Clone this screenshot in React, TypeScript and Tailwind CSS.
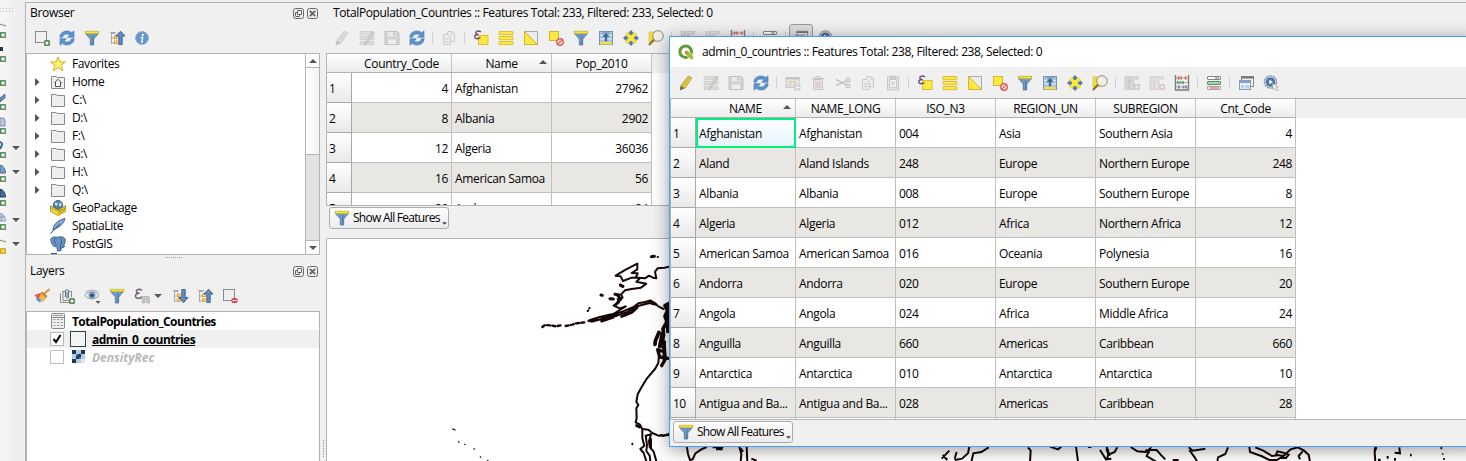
import React from "react";

type IconName = keyof typeof icons;

const Badge = () => (
  <g>
    <rect x="10" y="10" width="6" height="6" rx="1.5" fill="#5a8c5a" />
    <circle cx="13" cy="13" r="1.5" fill="#fff" />
  </g>
);

const Arrow = ({ down = false }: { down?: boolean }) => (
  <g>
    <path d="M2.5 2.5V14M2.5 3.5H6M2.5 8H5M2.5 13H5" stroke="#aaa" fill="none" />
    <path d="M1 2.5H7" stroke="#aaa" />
    <rect x="5.5" y="6" width="2.5" height="2.5" fill="#ffe0a0" stroke="#f09a2a" />
    <rect x="5.5" y="11" width="2.5" height="2.5" fill="#ffe0a0" stroke="#f09a2a" />
    <path
      d={down ? "M11.5 14.7L6.8 9.5H9.8V1.5H13.2V9.5H16Z" : "M11.5 1.2L6.8 6H9.8V14.5H13.2V6H16Z"}
      fill="#5f8fc0"
      stroke="#355a86"
      strokeWidth=".9"
    />
  </g>
);

const Lines = ({ a, b }: { a: string; b: string }) => (
  <g>
    {[1.5, 6.5, 11.5].map((y) => (
      <rect key={y} x="1" y={y} width="14" height="3.2" rx=".4" fill={a} stroke={b} strokeWidth=".8" />
    ))}
  </g>
);

const icons = {
  add: (
    <g>
      <rect x="1.5" y="1.5" width="11" height="11" fill="#f0f0f0" stroke="#8c8c8c" />
      <Badge />
    </g>
  ),
  refresh: (
    <g fill="#5b92cf" stroke="#3f74b0" strokeWidth=".6">
      <path d="M.8 7.2C1 3.2 4.3 1 8 1C10 1 11.7 1.7 12.8 2.8L15 .8V7.3H8.6L10.8 5C10 4.3 9.1 4 8 4C5.6 4 4 5 3.6 7.2Z" />
      <path d="M15.2 8.8C15 12.8 11.7 15 8 15C6 15 4.3 14.3 3.2 13.2L1 15.2V8.7H7.4L5.2 11C6 11.7 6.9 12 8 12C10.4 12 12 11 12.4 8.8Z" />
    </g>
  ),
  filter: (
    <g>
      <path d="M1.5 3.5L6.3 9V15H9.7V9L14.5 3.5Z" fill="#6f9bc9" stroke="#4a729c" strokeWidth=".8" />
      <rect x="1.2" y="1.2" width="13.6" height="2.6" fill="#f5e440" stroke="#b8a52c" strokeWidth=".6" />
      <path d="M8.8 5V14.5" stroke="#4a78aa" />
    </g>
  ),
  collapse: <Arrow />,
  expand: <Arrow down />,
  info: (
    <g>
      <circle cx="8" cy="8" r="6.4" fill="#6797c9" stroke="#8aaed4" />
      <circle cx="8.8" cy="4.9" r="1.1" fill="#fff" />
      <path d="M6.8 7.3H8.7L7.7 11.8H9.1" stroke="#fff" strokeWidth="1.3" fill="none" />
    </g>
  ),
  star: (
    <path
      d="M8 .8L10 6H15.4L11.2 9.2L12.8 15L8 11.6L3.2 15L4.8 9.2L.6 6H6Z"
      fill="#fdf070"
      stroke="#d3b02c"
    />
  ),
  folder: <path d="M1.5 2.500H6L7.500 3.500H14.500V14.500H1.500Z" fill="#eee" stroke="#888" />,
  home: (
    <g>
      <path d="M1.5 2.500H6L7.5 3.5H14.5V14.500H1.5Z" fill="#eee" stroke="#888" />
      <path d="M4.3 9L8 5.3L11.7 9M5.5 8.3V12.5H10.5V8.3" fill="#fff" stroke="#333" strokeWidth=".9" />
    </g>
  ),
  geopackage: (
    <g>
      <path d="M.5 6L8 9.5L15.5 6V11.5L8 15.5L.5 11.5Z" fill="#f4dc33" stroke="#a08a20" strokeWidth=".8" />
      <path d="M8 9.5V15.5L15.5 11.5V6Z" fill="#d8b91f" />
      <circle cx="8" cy="5" r="4.6" fill="#547ca5" stroke="#314f70" strokeWidth=".8" />
      <path d="M5 2.5L8 3L7 6L5 5ZM9.5 2L12 4.5L10 7L9 5Z" fill="#c8dcef" />
      <path d="M.5 6L8 9.7L15.5 6L15.5 8L8 11L.5 8Z" fill="#f7e24a" stroke="#796b25" strokeWidth=".6" />
    </g>
  ),
  feather: (
    <g>
      <path d="M15 .5C10 1.500 5.500 4.500 3.500 8.5L3 12L6 10.500C10.500 8.500 14 5 15 .5Z" fill="#87add4" stroke="#365a80" strokeWidth=".9" />
      <path d="M.5 15.500L10 5.500" stroke="#2e4b6b" />
    </g>
  ),
  elephant: (
    <g fill="#6594c2" stroke="#33567c" strokeWidth=".8">
      <path d="M.8 3C2 .8 5 .6 7 1.300C10 .3 14 .6 15.200 3C15.700 6 14.500 8.500 13 10H15L13.500 11.500H11.500C11.300 13 11.200 14 10.500 15H7.500C7 13.500 7.200 12 7 10.500L5 10.800C3 10.500 .5 6 .8 3Z" />
      <path d="M5 2.500C4 5 4.500 8 6.500 9M10.500 2.500C12.500 5 11.500 7 10.500 9V13" fill="none" />
    </g>
  ),
  brush: (
    <g>
      <path d="M15.500 1L10 6" stroke="#c99a4a" strokeWidth="2" />
      <path d="M6 5L8.500 3.500L13.500 8L12 10.500Z" fill="#c98f3a" />
      <path d="M.5 7L6 5L8.500 8L4 11.500Z" fill="#ea5a50" />
      <path d="M7 6L10 8.500L12 10.500L8 14.500L4.500 11Z" fill="#f2bb4c" />
      <path d="M1.500 11L4.500 9.500L7.500 12.500L5.500 14.500Z" fill="#5a93d8" />
    </g>
  ),
  addgroup: (
    <g fill="none" stroke="#868686">
      <path d="M1.500 5.500V14.500H10M3.500 3.500H4V12.500H10M3.500 3.500H6M10 3.500H12.500V9" />
      <path d="M6.500 9V2.500Q8 .5 9.500 2.500V10M8 4V11" stroke="#56718e" />
      <g stroke="none">
        <Badge />
      </g>
    </g>
  ),
  eye: (
    <g>
      <path d="M.8 7.500C4 2.500 11.500 2.500 15 7.500C11.500 12 4 12 .8 7.500Z" fill="#eee" stroke="#9a9a9a" />
      <circle cx="8" cy="7.300" r="3.400" fill="#6b97c4" />
      <circle cx="8" cy="7.300" r="1.600" fill="#254a72" />
      <path d="M1 4.500C5 1.500 11 1.500 15 4.500" fill="none" stroke="#aaa" />
      <path d="M11.500 13H16.500L14 15.800Z" fill="#555" />
    </g>
  ),
  epsilon: (
    <g>
      <path d="M8 2.500C5.500 .3 2 1.500 2.500 4C2.800 5.200 4 5.500 5.500 5.300C3 5.500 1 6.500 1.500 8.500C2 11 6 11 8 8.800" fill="none" stroke="#7a5a80" strokeWidth="1.500" />
      <path d="M8 15V9.500Q8 8.500 9 8.500H14Q15.500 8.500 15.500 10V15H12.800V11.500H11V15Z" fill="#c8c8c8" stroke="#999" strokeWidth=".5" />
    </g>
  ),
  remove: (
    <g>
      <rect x="1.500" y="1.500" width="11" height="11" fill="#eee" stroke="#8c8c8c" />
      <rect x="9.500" y="10" width="6" height="5" rx="1.500" fill="#e6474f" />
      <path d="M10.500 12.500H14.500" stroke="#fff" />
    </g>
  ),
  table: (
    <g>
      <rect x="1.500" y=".5" width="13" height="15" rx="1" fill="#eee" stroke="#888" />
      <path d="M2 4.500H14" stroke="#888" />
      <path d="M3 2.500H13M3.500 6.500H5.500M7 6.500H9M10.500 6.500H13M3.500 9.500H5.500M7 9.500H9M10.500 9.500H13M3.500 12.500H5.500M7 12.500H9M10.500 12.500H13" stroke="#999" />
    </g>
  ),
  raster: (
    <g>
      <rect x="1" y="1" width="13" height="13" fill="#b4cbe8" />
      <path d="M1 1H5V5H1ZM10 1H14V5H10ZM5 5H10V10H5ZM1 10H5V14H1Z" fill="#20365a" />
      <path d="M5 5H7V7H5ZM8 8H10V10H8Z" fill="#5678a6" />
      <path d="M10 10H14V14H10Z" fill="#dce8f5" />
    </g>
  ),
  pencil: (
    <g>
      <path d="M3 10.500L10.500 1L13.800 3L7 13L2.200 15Z" fill="#ecd63c" stroke="#9a8a3a" strokeWidth=".8" />
      <path d="M1.800 15.200L3 10.800L6.500 13Z" fill="#6a6658" />
      <path d="M5 11L11.800 2.200" stroke="#b29d24" />
    </g>
  ),
  pencilOff: (
    <g>
      <path d="M3 10.500L10.500 1L13.800 3L7 13L2.200 15Z" fill="#dbdad8" stroke="#c6c5c2" strokeWidth=".8" />
      <path d="M1.800 15.200L3 10.800L6.500 13Z" fill="#bdbdbd" />
    </g>
  ),
  multiOff: (
    <g>
      <Lines a="#dddcd7" b="#ceccc5" />
      <path d="M6 13L13 2L15 3.500L8 13L5.500 14.500Z" fill="#d2d2d0" stroke="#b7b7b7" strokeWidth=".7" />
    </g>
  ),
  saveOff: (
    <g>
      <path d="M1 1.500H13L15 3.500V14.500H1Z" fill="#d2d2d2" stroke="#c0c0c0" />
      <path d="M3.500 2H12V6.500H3.500Z" fill="#e8e8e8" />
      <path d="M4 9.500H12V14H4Z" fill="#eee" />
      <path d="M9.500 2.500H11V5.500H9.500Z" fill="#bbb" />
    </g>
  ),
  copyOff: (
    <g fill="#ececec" stroke="#cacaca">
      <path d="M6.500 1.500H11L13.500 4V11.500H6.500Z" />
      <path d="M2.500 4.500H7L9.500 7V14.500H2.500ZM4 9H8M4 11.500H8M11 1.500V4H13.500" />
    </g>
  ),
  pasteOff: (
    <g fill="#e2e2e2" stroke="#c8c8c8">
      <rect x="2.500" y="2" width="11" height="13" />
      <path d="M4.500 4.500H11.500V12.500H4.500Z" fill="#efefef" />
      <path d="M5.500 1H10.500V4H5.500Z" fill="#cecece" />
      <path d="M6 7.500H10M6 9.500H9" />
    </g>
  ),
  cutOff: (
    <g fill="none" stroke="#c5c5c5" strokeWidth="1.400">
      <path d="M1 4.500L11 9.500M1 10.500L11 6" />
      <circle cx="13" cy="5" r="1.800" />
      <circle cx="13" cy="11" r="1.800" />
    </g>
  ),
  trashOff: (
    <g fill="#e9e2e2" stroke="#cdc2c2">
      <path d="M3.500 4.500H12.500V14.500H3.500Z" />
      <path d="M2 3.500H14M6 3V1.500H10V3M6 6.500V13M8 6.500V13M10 6.500V13" fill="none" />
    </g>
  ),
  addrowOff: (
    <g>
      <rect x="1" y="2.500" width="13" height="10" fill="#e7e7e7" stroke="#c5c5c5" />
      <path d="M1 3.500H14" stroke="#c4c4c4" strokeWidth="2" />
      <path d="M3 7H12" stroke="#e4dcb0" strokeWidth="2" />
      <path d="M1 10H14M5.500 5V12M9.500 5V12" stroke="#cfcfcf" />
      <rect x="9.500" y="9.500" width="6" height="6" fill="#cfcfcb" />
      <path d="M12.500 10.500V14.500M10.500 12.500H14.500" stroke="#f4f4f4" />
    </g>
  ),
  selExpr: (
    <g>
      <rect x="5.500" y="5.500" width="9.500" height="9" fill="#fce83e" stroke="#d8bd30" />
      <path d="M8 2C5.500 .2 2.500 1.200 2.800 3.200C3 4.300 4.300 4.700 5.500 4.500C3.300 4.500 1.300 5.400 1.700 7.200C2.200 9.200 5.500 9.300 7.500 7.500" fill="none" stroke="#6a4670" strokeWidth="1.400" />
    </g>
  ),
  selAll: <Lines a="#fce83e" b="#d2b52c" />,
  invert: (
    <g>
      <path d="M1.500 1.500H14.500V14.500Z" fill="#ececec" stroke="#a8a8a8" />
      <path d="M1.500 1.500V14.500H14.500Z" fill="#fce83e" stroke="#d2b52c" />
    </g>
  ),
  deselect: (
    <g>
      <rect x="1.500" y="1.500" width="9" height="9" fill="#fce83e" stroke="#d2b52c" />
      <circle cx="12" cy="12" r="3.300" fill="#f6d0d0" stroke="#dc4a4e" strokeWidth="1.200" />
      <path d="M9.800 14.200L14.200 9.800" stroke="#dc4a4e" />
    </g>
  ),
  moveTop: (
    <g>
      <rect x="1.500" y="1.500" width="13" height="13" fill="#a9c4e2" stroke="#7394b8" />
      <rect x="2" y="12" width="12" height="2.500" fill="#f5e03e" />
      <path d="M2 5.500H14M2 9H14" stroke="#e3edf7" />
      <path d="M8 3.500L4.800 6.500H7.200V11H8.800V6.500H11.200ZM4.500 3H11.500" fill="#39638f" stroke="#39638f" strokeWidth=".6" />
    </g>
  ),
  pan: (
    <g>
      <rect x="3" y="3" width="10" height="10" fill="#fce83e" stroke="#e0cf55" strokeWidth=".7" />
      <path d="M8 0L11 3.200H9.300V5H6.700V3.200H5ZM8 16L11 12.800H9.300V11H6.700V12.800H5ZM0 8L3.200 5V6.700H5V9.300H3.200V11ZM16 8L12.800 5V6.700H11V9.300H12.800V11Z" fill="#527ba6" />
    </g>
  ),
  zoomSel: (
    <g>
      <path d="M1 2H7V12H1Z" fill="#f7de34" stroke="#d2b52c" strokeWidth=".6" />
      <path d="M6 9.500L1 15" stroke="#8b6d38" strokeWidth="2" />
      <circle cx="10" cy="6" r="5.300" fill="#f1efe0" stroke="#8d8d88" />
    </g>
  ),
  newColOff: (
    <g>
      <path d="M1 1.500H4.500V14.500H1ZM5.500 1.500H14.500V4H5.500ZM5.500 5.500H10V14.500H5.500Z" fill="#dcdcdc" stroke="#c6c6c6" strokeWidth=".8" />
      <path d="M1 5H10M1 8H10M1 11H10" stroke="#cacaca" />
      <rect x="10" y="9" width="6" height="6" rx="1" fill="#cacac6" />
      <path d="M13 10V14M11 12H15" stroke="#f4f4f4" />
    </g>
  ),
  delColOff: (
    <g>
      <path d="M1 1.500H4.500V14.500H1ZM5.500 1.500H14.500V4H5.500ZM5.500 5.500H10V14.500H5.500Z" fill="#e3e0e0" stroke="#cecccc" strokeWidth=".8" />
      <rect x="10" y="9" width="6" height="6" rx="1" fill="#dac6c8" />
      <path d="M11.500 10.500L14.500 13.500M14.500 10.500L11.500 13.500" stroke="#f8f4f4" />
    </g>
  ),
  abacus: (
    <g>
      <path d="M1.500 0V15.500M14.500 0V15.500M1 15H15" stroke="#7b7b7b" strokeWidth="1.400" />
      <path d="M2 3H14M2 7.500H14M2 12H14" stroke="#aaa" />
      <path d="M4.500 1.500V4.500M7 1.500V4.500M11.500 1.500V4.500" stroke="#e2595c" strokeWidth="1.700" />
      <path d="M4 6V9M6.500 6V9M9 6V9" stroke="#62a56c" strokeWidth="1.700" />
      <path d="M5 10.500V13.500M9.500 10.500V13.500M12 10.500V13.500" stroke="#6f87a4" strokeWidth="1.700" />
    </g>
  ),
  conditional: (
    <g>
      <rect x="1.500" y="1.500" width="13" height="3" rx=".5" fill="#fafafa" stroke="#858585" />
      <rect x="1.500" y="6.500" width="13" height="3" rx=".5" fill="#a5d6b0" stroke="#5d8f69" />
      <rect x="1.500" y="11.500" width="13" height="3" rx=".5" fill="#fafafa" stroke="#a5a5a5" />
      <path d="M9 3H13" stroke="#777" />
      <path d="M3.500 13H13" stroke="#d84848" />
    </g>
  ),
  dock: (
    <g>
      <rect x="3.500" y="1.500" width="12" height="10" fill="#eee" stroke="#8b8b8b" />
      <path d="M3 2.500H16" stroke="#777" strokeWidth="2" />
      <rect x="1.500" y="5.500" width="11" height="9" fill="#e9f0f8" stroke="#8b9bb0" />
      <path d="M2 7H12" stroke="#6c9bcb" strokeWidth="1.800" />
      <path d="M3 10H6V13.500H3ZM7.500 10H11.500V13.500H7.500Z" fill="#b9cee4" />
    </g>
  ),
  actions: (
    <g>
      <circle cx="7.500" cy="7" r="6.200" fill="#c3ccd6" stroke="#8b97a6" strokeWidth="1.200" strokeDasharray="2.600 .8" />
      <circle cx="7.500" cy="7" r="4" fill="#4d7eb5" stroke="#355f90" />
      <path d="M6.300 4.800L9.900 7L6.300 9.200Z" fill="#fff" />
      <path d="M9.500 8.500L15 12L13 12.500L15.500 15L14 16L12 13.500L10.500 15Z" fill="#fff" stroke="#999" strokeWidth=".7" />
    </g>
  ),
};

const Icon = ({ name, size = 16 }: { name: IconName; size?: number }) => (
  <svg width={size} height={size} viewBox="0 0 16 16" className="shrink-0 overflow-visible">
    {icons[name]}
  </svg>
);

const Toolbar = ({ items }: { items: (IconName | "|")[] }) => (
  <div className="flex h-[25px] shrink-0 items-center">
    {items.map((n, i) =>
      n === "|" ? (
        <div key={i} className="flex h-3 w-[7px] shrink-0 justify-center">
          <div className="w-px bg-[#d0d0d0]" />
        </div>
      ) : (
        <div key={i} className="flex w-[25px] shrink-0 justify-center">
          <Icon name={n} />
        </div>
      ),
    )}
  </div>
);

const DockTitle = ({ title }: { title: string }) => (
  <div className="flex h-[18px] shrink-0 items-center justify-between pr-0.5 pl-[4px]">
    <span className="tracking-[-0.3px]">{title}</span>
    <span className="flex gap-[3px]">
      <svg width="11" height="11" viewBox="0 0 11 11" fill="none" stroke="#666">
        <rect x=".5" y=".5" width="10" height="10" rx="2" />
        <path d="M4.500 2.500H8.500V6.500H4.500ZM4 4.500H2.500V8.500H6.500V7" />
      </svg>
      <svg width="11" height="11" viewBox="0 0 11 11" fill="none" stroke="#666">
        <rect x=".5" y=".5" width="10" height="10" rx="2" />
        <path d="M2.800 2.800L8.200 8.200M8.200 2.800L2.800 8.200" strokeWidth="1.900" />
      </svg>
    </span>
  </div>
);

const tree: [IconName, string, boolean][] = [
  ["star", "Favorites", false],
  ["home", "Home", true],
  ["folder", "C:\\", true],
  ["folder", "D:\\", true],
  ["folder", "F:\\", true],
  ["folder", "G:\\", true],
  ["folder", "H:\\", true],
  ["folder", "Q:\\", true],
  ["geopackage", "GeoPackage", false],
  ["feather", "SpatiaLite", false],
  ["elephant", "PostGIS", false],
];

const Tri = ({ up = false }: { up?: boolean }) => (
  <svg width="8" height="4" viewBox="0 0 8 4" className="shrink-0">
    <path d={up ? "M0 4H8L4 0Z" : "M0 0H8L4 4Z"} fill="#555" />
  </svg>
);

const ShowAll = () => (
  <div className="relative ml-[3px] flex h-[22px] w-[120px] shrink-0 items-center gap-[3px] rounded-[3px] border border-[#adadad] bg-linear-to-b from-[#fefefe] to-[#ececec] pl-[4px]">
    <Icon name="filter" />
    <span className="tracking-[-0.72px]">Show All Features</span>
    <svg width="5" height="3" viewBox="0 0 6 3" className="absolute right-px bottom-[3px]">
      <path d="M0 0H6L3 3Z" fill="#444" />
    </svg>
  </div>
);

const Grid = ({
  cols,
  rows,
  sorted,
  rightCols,
  selected = false,
}: {
  cols: string[];
  rows: string[][];
  sorted: number;
  rightCols: number[];
  selected?: boolean;
}) => (
  <div className="min-h-0 flex-1 overflow-hidden bg-white tracking-[-0.33px]">
    <div className="flex h-[19px] bg-[#f0f0f0]">
      <div className="flex border-b border-[#b0b0b0] bg-linear-to-b from-white to-[#ececec]">
        <div className="w-[25px]" />
        {cols.map((c, i) => (
          <div
            key={c}
            className="relative flex w-[100px] items-center justify-center border-r border-[#c4c4c4] pt-px"
          >
            {c}
            {i === sorted && (
              <span className="absolute top-[6px] right-1">
                <Tri up />
              </span>
            )}
          </div>
        ))}
      </div>
    </div>
    {rows.map((r, ri) => (
      <div key={ri} className="flex h-[30px]">
        <div className="flex w-[25px] items-center border-r border-b border-[#a8a8a8] bg-linear-to-b from-white to-[#e9e9e9] pt-[3px] pl-0.5 tracking-[-0.6px]">
          {ri + 1}
        </div>
        {r.map((v, ci) => (
          <div
            key={ci}
            className={`flex w-[100px] items-center border-r border-b border-[#c0c0c0] px-[3px] pt-0.5 whitespace-nowrap ${
              ri % 2 ? "bg-[#e8e7e3]" : "bg-white"
            } ${rightCols.includes(ci) ? "justify-end" : ""} ${
              selected && ri === 0 && ci === 0
                ? "bg-linear-to-b from-white to-[#e6f3fd] outline-2 -outline-offset-2 outline-[#00f080]"
                : ""
            }`}
          >
            {v}
          </div>
        ))}
      </div>
    ))}
  </div>
);

const population = [
  ["4", "Afghanistan", "27962"],
  ["8", "Albania", "2902"],
  ["12", "Algeria", "36036"],
  ["16", "American Samoa", "56"],
  ["20", "Andorra", "84"],
];

const countries = [
  ["Afghanistan", "Afghanistan", "004", "Asia", "Southern Asia", "4"],
  ["Aland", "Aland Islands", "248", "Europe", "Northern Europe", "248"],
  ["Albania", "Albania", "008", "Europe", "Southern Europe", "8"],
  ["Algeria", "Algeria", "012", "Africa", "Northern Africa", "12"],
  ["American Samoa", "American Samoa", "016", "Oceania", "Polynesia", "16"],
  ["Andorra", "Andorra", "020", "Europe", "Southern Europe", "20"],
  ["Angola", "Angola", "024", "Africa", "Middle Africa", "24"],
  ["Anguilla", "Anguilla", "660", "Americas", "Caribbean", "660"],
  ["Antarctica", "Antarctica", "010", "Antarctica", "Antarctica", "10"],
  ["Antigua and Ba...", "Antigua and Ba...", "028", "Americas", "Caribbean", "28"],
];

const sideIcons: { art: React.ReactNode; menu?: boolean; yellow?: boolean }[] = [
  { art: <path d="M0 4Q2 2 3 4T6 4" stroke="#777" fill="none" /> },
  { art: <path d="M0 2H3V6H0Z" fill="#20365a" /> },
  { art: null },
  { art: <path d="M0 5L5 1V5L0 9Z" fill="#6f93ba" stroke="#33567c" strokeWidth=".7" /> },
  { art: <path d="M0 1H3Q5 1 5 4V9H0Z" fill="#b8cade" stroke="#7c8ea5" /> },
  { art: <path d="M0 1Q3 2 1.500 5L0 8" stroke="#3d6796" strokeWidth="2" fill="none" />, menu: true },
  { art: <path d="M0 0Q5 1 5.500 8H0Z" fill="#7fa2c6" stroke="#42658c" />, menu: true },
  { art: <path d="M0 0Q5 1 5.500 8H0Z" fill="#466f9c" stroke="#1f3a5a" /> },
  { art: <path d="M0 0Q5 1 5.500 8H0ZM0 4H5M2 1V8" fill="#e2ebf5" stroke="#7c9abb" />, menu: true },
  { art: <path d="M0 4Q2 2 3 4T6 4" stroke="#777" fill="none" />, menu: true, yellow: true },
];

const MapOutlines = () => (
  <svg width="1139" height="222" viewBox="327 239 1139 222" className="block" fill="none" stroke="#150606">
    <g transform="translate(325 235) scale(.33333)" strokeWidth="6" strokeLinejoin="round" strokeLinecap="round">
      <path d="M1040 94L1018 98L998 100L990 110L994 130L984 128L972 122L960 130L940 128L920 128L894 138L887 124L872 122L902 104L937 86L937 103L920 114L938 115L933 126L943 132L934 140L964 146L948 158L920 162L900 166L888 178L893 188L878 192L882 202L866 212L884 220L902 214L886 224L870 234" />
      <path d="M878 182L888 192L880 200L870 212" strokeWidth="8" />
      <path d="M790 258L824 246L860 238L892 230L926 216L940 205L960 201L976 196L990 204L1000 214L1016 222M800 260L838 250L876 242L910 230L936 214L974 204L996 210" />
      <path d="M794 257L812 252M832 249L878 238M890 244L920 232L936 218M972 200L986 206M830 258L865 246" strokeWidth="9" />
      <path d="M652 276L660 270L676 271L692 274L708 271M722 273L742 269L754 265L780 262" strokeWidth="7" strokeDasharray="9 7" />
      <path d="M1034 204L1020 212L1028 226L1020 244L1026 260L1014 282L1016 300L1010 330L1018 342L1020 368M1034 232L1027 250L1031 280M1002 292L991 318L990 328M1012 296L1004 334" strokeWidth="11" />
      <path d="M1028 210V290M1018 320V376M1030 370L1004 366L998 344L1010 348M1010 392L1020 374" strokeWidth="10" />
      <path d="M1002 360L1000 384L990 402L966 430L950 456L938 478L934 500L940 510L934 520L935 550L932 562L944 568L952 582L952 610L958 632L946 642L956 654L964 678M952 582L970 584L982 594L1000 602L1035 600" />
      <path d="M962 602L978 598L972 618L974 636L986 650L994 678M962 602L966 630L964 648L974 662L976 678M978 612L978 640" strokeWidth="6" />
      <path d="M935 572L944 576M979 65L988 64M886 150L894 154M828 180L832 181M855 191L865 192M870 178L882 180M886 150L890 153" strokeWidth="9" />
      <path d="M788 228L790 226M793 220L794 219M922 626V628M998 66H999" strokeWidth="6" />
      <path d="M383 582L390 585M401 621H402M419 628H420M447 642H448M466 666H467M488 676H489" strokeWidth="4" />
    </g>
    <g transform="translate(660 370) scale(.33333)" strokeWidth="6">
      <path d="M0 194L10 198L28 191M80 226L84 252L90 270L98 268L106 250L124 238L140 231M158 232H190M238 230L244 252L242 276M260 230L262 276M274 266L290 272M845 266L868 242M848 255L862 270M884 266L890 246M884 270L906 266L924 250L928 230M934 276L940 250L964 246L986 232M1104 232L1112 242L1110 276" />
      <path d="M168 236H188M241 236L248 246" strokeWidth="9" />
    </g>
    <g transform="translate(1050 370) scale(.33333)" strokeWidth="6">
      <path d="M0 230L24 238L34 230M78 230L84 274M114 231H124M150 240L168 268L184 266M170 230L176 250L170 270M202 232L194 246L176 254M242 231L262 244L286 246L300 236L290 258L320 276M300 240L320 240L334 256L346 268M368 270H386M416 232L428 242L466 236M418 240L434 262L442 276M534 232L526 252L504 262L502 276M598 230L600 246L634 258L658 270L680 270L700 258L678 254L682 244L700 248L716 254L708 264L690 264M616 232L640 242L666 258L684 256M700 258L722 238L744 232L762 242L776 254L780 276M758 244L746 258L750 268M978 230L974 246L976 276M1048 232L1050 250L1034 248" />
      <path d="M170 236L178 258M286 240L298 250M978 232L974 242M984 270H992M1010 262H1016M1032 268H1038M1080 255H1085" strokeWidth="8" />
      <path d="M1174 231V238M1178 250V254M1182 264V270" strokeWidth="5" />
    </g>
  </svg>
);

export default function App() {
  return (
    <div className="relative flex h-[461px] w-[1466px] overflow-hidden bg-[#f0f0f0] font-['Open_Sans','Noto_Sans',sans-serif] text-[12px] leading-4 tracking-[-0.38px] text-black">
      <aside className="flex w-[25px] shrink-0 flex-col bg-linear-to-r from-[#f6f6f6] to-[#ececec] pt-2">
        <svg width="14" height="5" className="mb-[5px]">
          <path d="M0 .5H14M0 3.500H14" stroke="#bbb" strokeDasharray="1 2" />
        </svg>
        {sideIcons.map((s, i) => (
          <div key={i} className="flex h-6 shrink-0 items-center">
            <svg width="7" height="18" viewBox="0 0 7 18" className="shrink-0">
              {s.art}
              <rect x="-1" y="11" width="7" height="6" rx="1" fill={s.yellow ? "#d5ab2d" : "#5a8c5a"} />
              <rect x="1.500" y="12.500" width="3" height="3" fill={s.yellow ? "#fce25a" : "#fff"} />
            </svg>
            {s.menu && (
              <span className="ml-[5px] flex pb-[5px]">
                <Tri />
              </span>
            )}
          </div>
        ))}
      </aside>

      <div className="flex min-w-0 flex-1 flex-col pt-0.5">
        <div className="flex min-h-0 flex-1 border-t border-l border-[#b4b4b4]">
          <section className="flex w-[294px] shrink-0 flex-col">
            <div className="pt-px">
              <DockTitle title="Browser" />
            </div>
            <div className="mt-[3px] mb-[3px] pl-[3px]">
              <Toolbar items={["add", "refresh", "filter", "collapse", "info"]} />
            </div>
            <div className="flex h-[202px] shrink-0 border border-[#b4b4b4] bg-white">
              <div className="flex-1 overflow-hidden pt-px">
                {tree.map(([icon, label, open], i) => (
                  <div key={i} className="flex h-[18px] items-center pl-2">
                    <svg width="5" height="8" viewBox="0 0 5 8" className="mr-[10px] shrink-0">
                      {open && <path d="M0 0L4.500 4L0 8Z" fill="#555" />}
                    </svg>
                    <Icon name={icon} />
                    <span className="ml-1.5">{label}</span>
                  </div>
                ))}
                <div className="ml-6 h-0.5 w-1.5 bg-[#33567c]" />
              </div>
              <div className="flex w-[14px] flex-col border-l border-[#b4b4b4] bg-[#e3e3e3]">
                <div className="flex h-[14px] items-center justify-center border-b border-[#b4b4b4] bg-white">
                  <Tri up />
                </div>
                <div className="h-[87px] border-b border-[#b4b4b4] bg-linear-to-r from-white to-[#f2f2f2]" />
                <div className="flex-1" />
                <div className="flex h-[14px] items-center justify-center border-t border-[#b4b4b4] bg-white">
                  <Tri />
                </div>
              </div>
            </div>
            <div className="flex h-[7px] shrink-0 justify-center pt-0.5">
              <div className="h-px w-[17px] border-t border-dotted border-[#999]" />
            </div>
            <DockTitle title="Layers" />
            <div className="mt-[3px] mb-[3px] flex pl-[3px]">
              <Toolbar items={["brush", "addgroup", "eye", "filter", "epsilon"]} />
              <div className="flex w-[13px] items-center">
                <Tri />
              </div>
              <Toolbar items={["expand", "collapse", "remove"]} />
            </div>
            <div className="flex-1 border border-b-0 border-[#b4b4b4] bg-white font-bold">
              <div className="flex h-[18px] items-center pl-[23px]">
                <Icon name="table" />
                <span className="ml-1.5 pt-px tracking-[-0.62px]">TotalPopulation_Countries</span>
              </div>
              <div className="flex h-[18px] items-center bg-[#f0f0f0] pl-[23px]">
                <div className="h-[14px] w-[14px] border border-[#b8b8b8] bg-white">
                  <svg width="12" height="12" viewBox="0 0 12 12">
                    <path d="M2.500 6L5 9L9.500 2" fill="none" stroke="#000" strokeWidth="2" />
                  </svg>
                </div>
                <div className="ml-1.5 h-4 w-4 border border-[#31425c] bg-[#f4f4f4]" />
                <span className="ml-1.5 pt-px tracking-[-0.5px] underline">admin_0_countries</span>
              </div>
              <div className="flex h-[18px] items-center pl-[23px]">
                <div className="mr-[7px] h-[14px] w-[14px] border border-[#c0c0c0] bg-white" />
                <Icon name="raster" />
                <span className="ml-[5px] pt-px tracking-[0px] text-[#b8b8b8] italic">DensityRec</span>
              </div>
            </div>
          </section>

          <div className="flex w-[6px] shrink-0 items-end justify-center pb-1">
            <div className="h-[17px] border-l border-dotted border-[#999]" />
          </div>

          <main className="flex min-w-0 flex-1 flex-col">
            <div className="mt-px flex h-[18px] shrink-0 items-center pl-[7px]">
              TotalPopulation_Countries :: Features Total: 233, Filtered: 233, Selected: 0
            </div>
            <div className="mt-[3px] mb-[3px] flex pl-[3px]">
              <Toolbar
                items={[
                  "pencilOff", "multiOff", "saveOff", "refresh", "|", "copyOff", "|",
                  "selExpr", "selAll", "invert", "deselect", "filter", "moveTop", "pan", "zoomSel", "|",
                  "newColOff", "delColOff", "abacus", "|", "conditional", "|",
                ]}
              />
              <div className="-mt-px flex h-[26px] w-6 items-center justify-center rounded-[3px] border border-[#999] bg-[#dcdcdc]">
                <Icon name="dock" size={14} />
              </div>
              <Toolbar items={["actions"]} />
            </div>
            <div className="flex h-[153px] shrink-0 border border-r-0 border-[#b4b4b4]">
              <Grid
                cols={["Country_Code", "Name", "Pop_2010"]}
                rows={population}
                sorted={1}
                rightCols={[0, 2]}
              />
            </div>
            <div className="mt-px mb-[9px]">
              <ShowAll />
            </div>
            <div className="min-h-0 flex-1 overflow-hidden border-t border-l border-[#b4b4b4] bg-white">
              <MapOutlines />
            </div>
          </main>
        </div>
      </div>

      <div className="absolute top-[36px] left-[669px] flex h-[411px] w-[810px] flex-col border border-[#4a9ff0] bg-[#f0f0f0] shadow-[0_3px_16px_rgba(0,0,0,0.4)]">
        <div className="flex h-[30px] shrink-0 items-center bg-white pl-2">
          <svg width="16" height="16" viewBox="0 0 16 16">
            <circle cx="7.700" cy="7.700" r="5.800" fill="none" stroke="#5e9b35" strokeWidth="3" />
            <path d="M7 7H10.500L15.500 12V15.500H12.500L7 10Z" fill="#a4bf3a" stroke="#fff" strokeWidth=".7" />
            <path d="M7 7H10L8.500 11L7 9.500Z" fill="#ee7913" />
          </svg>
          <span className="ml-2">admin_0_countries :: Features Total: 238, Filtered: 238, Selected: 0</span>
        </div>
        <div className="flex h-[31px] shrink-0 items-center pl-[3px]">
          <Toolbar
            items={[
              "pencil", "multiOff", "saveOff", "refresh", "|",
              "addrowOff", "trashOff", "cutOff", "copyOff", "pasteOff", "|",
              "selExpr", "selAll", "invert", "deselect", "filter", "moveTop", "pan", "zoomSel", "|",
              "newColOff", "delColOff", "abacus", "|", "conditional", "|", "dock", "actions",
            ]}
          />
        </div>
        <div className="flex h-[322px] shrink-0 border-y border-l border-[#b4b4b4]">
          <Grid
            cols={["NAME", "NAME_LONG", "ISO_N3", "REGION_UN", "SUBREGION", "Cnt_Code"]}
            rows={[...countries, ["", "", "", "", "", ""]]}
            sorted={0}
            rightCols={[5]}
            selected
          />
        </div>
        <div className="pt-px">
          <ShowAll />
        </div>
      </div>
    </div>
  );
}
